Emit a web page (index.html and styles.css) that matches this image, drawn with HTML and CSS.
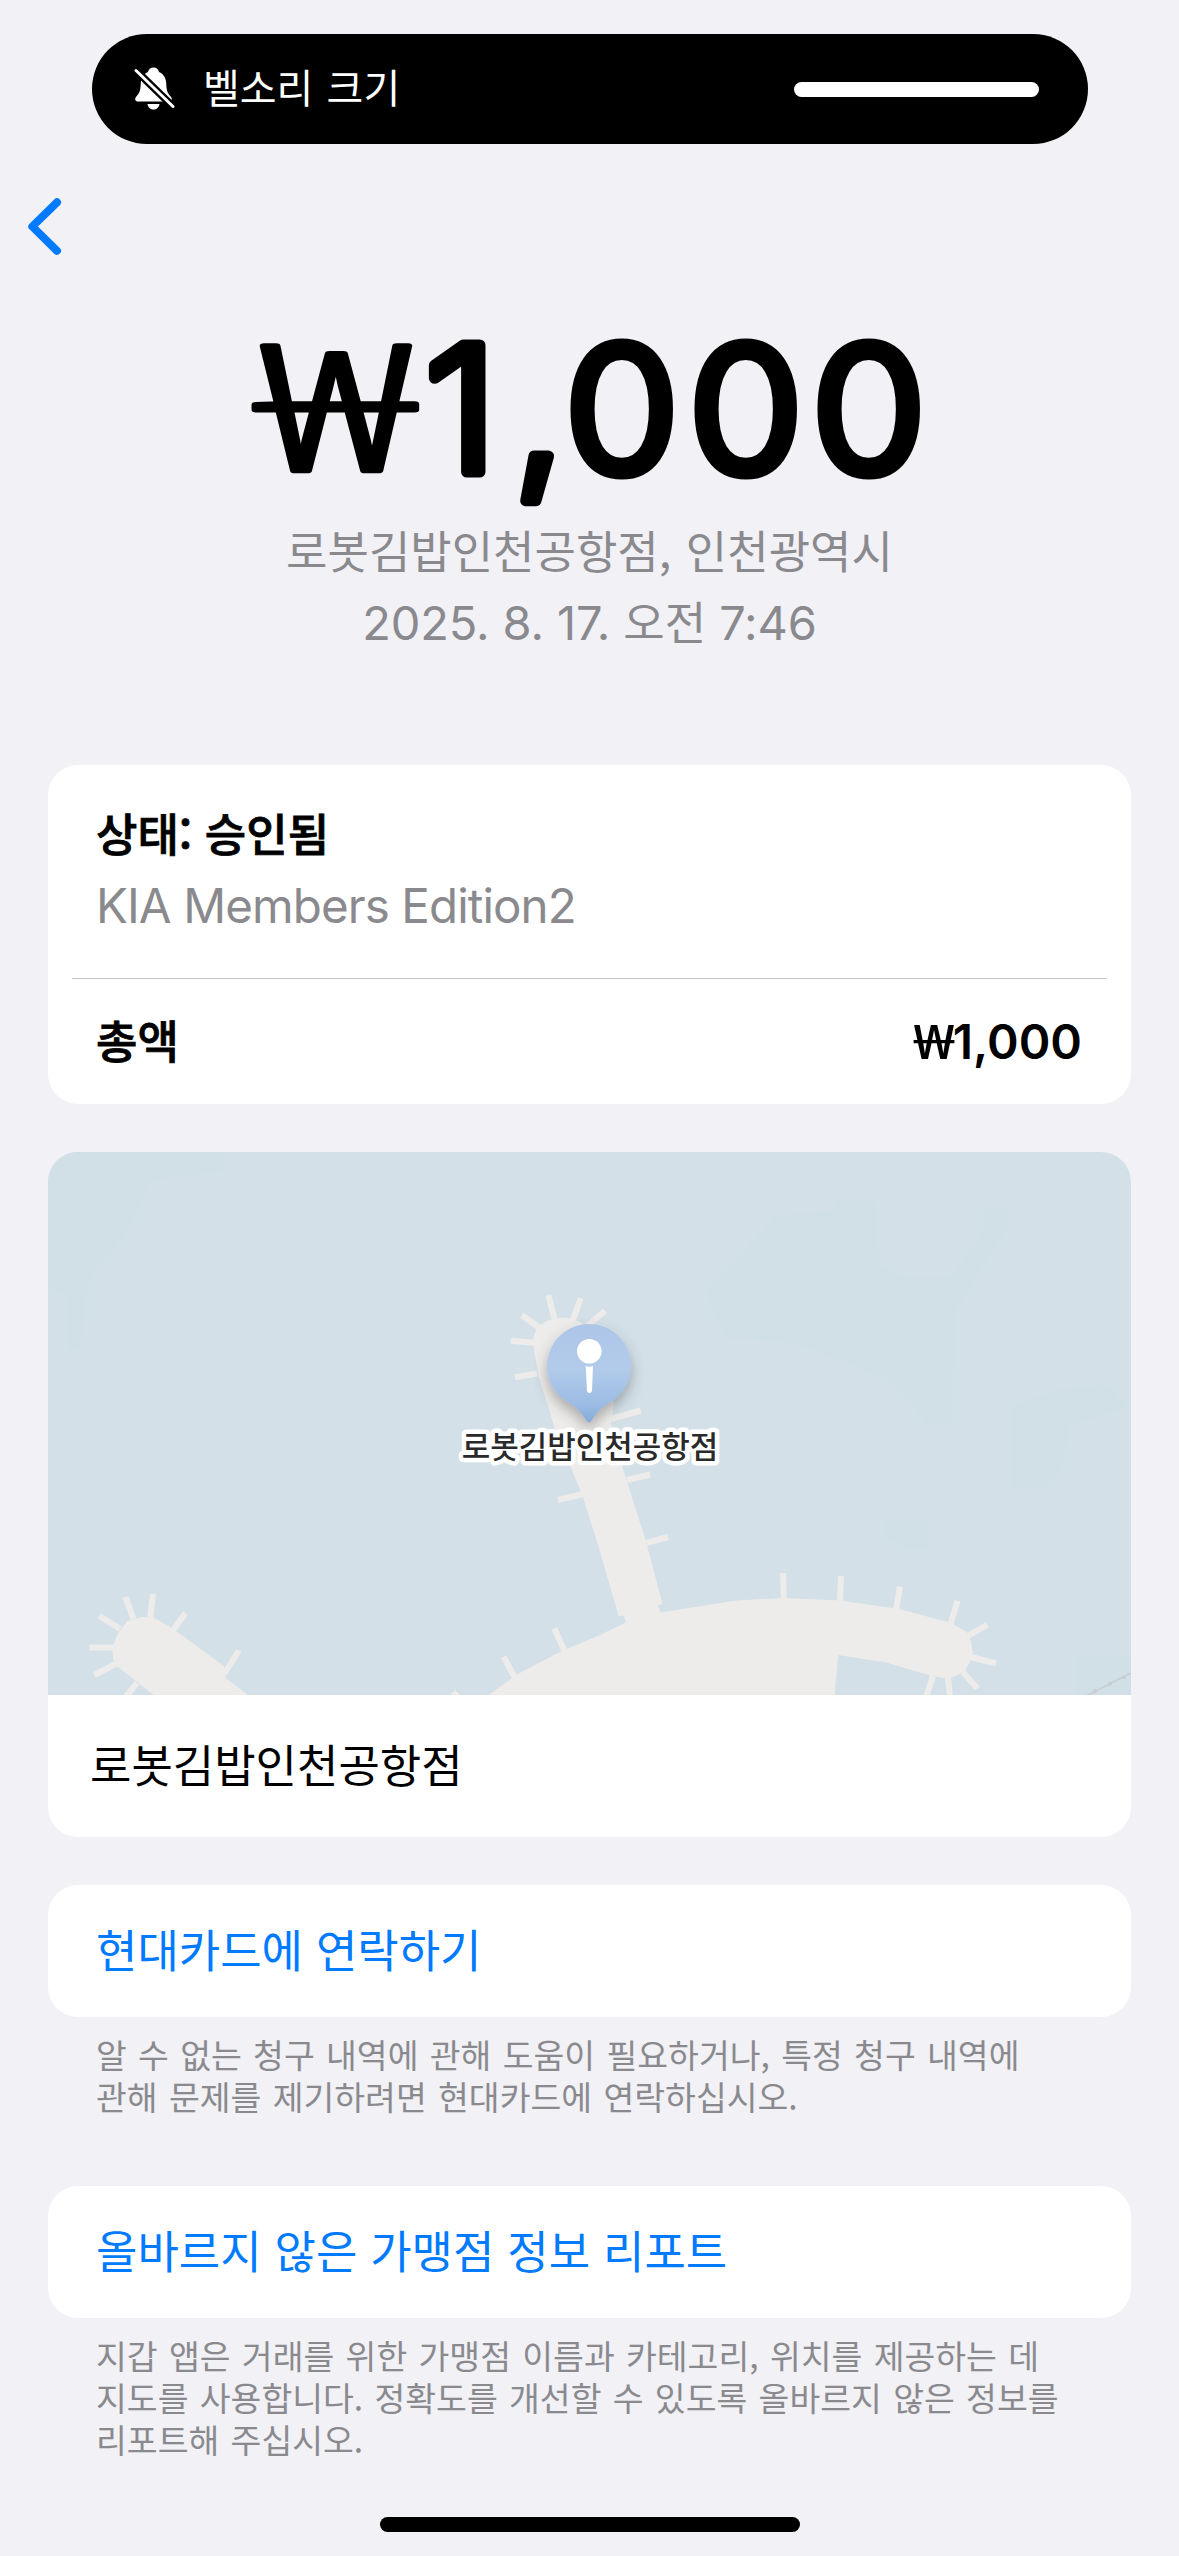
FILE: index.html
```html
<!DOCTYPE html>
<html lang="ko">
<head>
<meta charset="utf-8">
<title>거래 세부사항</title>
<link rel="stylesheet" href="styles.css">
</head>
<body>
<main class="screen">
  <div class="island">
    <svg class="bell" width="42" height="46" viewBox="0 0 42 46">
      <path d="M20.500 1.500C17.500 1.500 15.500 3.400 15 6C10.500 8 8 12 7.800 17C7.500 25 6.500 27 3 31C1.500 33 2 35.500 5 35.500H36C39 35.500 39.500 33 38 31C34.500 27 33.500 25 33.200 17C33 12 30.500 8 26 6C25.500 3.400 23.500 1.500 20.500 1.500Z" fill="#fff"/>
      <path d="M14.500 38H26.500C26 41.500 23.500 43.500 20.500 43.500S15 41.500 14.500 38Z" fill="#fff"/>
      <path d="M3 4.500L40 40.500" stroke="#000" stroke-width="7.500"/>
      <path d="M3 4.500L40 40.500" stroke="#fff" stroke-width="3" stroke-linecap="round"/>
    </svg>
    <span class="island-label">벨소리 크기</span>
    <span class="volume"></span>
  </div>

  <nav class="nav">
    <svg width="40" height="64" viewBox="0 0 40 64"><path d="M33 7.300L8.300 31.500L33 55.800" fill="none" stroke="#007aff" stroke-width="8" stroke-linecap="round" stroke-linejoin="round"/></svg>
  </nav>

  <header class="hero">
    <svg class="amount" width="700" height="200" viewBox="240 320 700 200">
      <text class="won" x="157.500" y="470.500">₩</text>
      <text class="digits" x="398.500 482 530 646.500 762" y="472">1,000</text>
    </svg>
    <p class="place">로봇김밥인천공항점, 인천광역시</p>
    <p class="date"><span>2025. 8. 17. </span>오전<span> 7:46</span></p>
  </header>

  <section class="card summary">
    <div class="status">
      <p class="strong">상태: 승인됨</p>
      <p class="card-name">KIA Members Edition2</p>
    </div>
    <div class="total">
      <span class="strong">총액</span>
      <span class="sum"><span class="sum-won">₩</span>1,000</span>
    </div>
  </section>

  <section class="card merchant">
    <svg class="map" width="1083" height="543" viewBox="48 1152 1083 543">
      <defs>
        <linearGradient id="pin" x1="0" y1="0" x2="0" y2="1">
          <stop offset="0" stop-color="#adc6e8"/>
          <stop offset=".45" stop-color="#b2cbea"/>
          <stop offset=".8" stop-color="#9dbde4"/>
          <stop offset="1" stop-color="#85abdb"/>
        </linearGradient>
        <filter id="shade" x="-40%" y="-40%" width="180%" height="180%">
          <feDropShadow dx="0" dy="7" stdDeviation="7" flood-color="#444" flood-opacity=".4"/>
        </filter>
      </defs>
      <rect x="48" y="1152" width="1083" height="543" fill="#d3e0e8"/>
      <g fill="#d1dfe7">
        <path d="M48 1152H225V1170L150 1181L128 1230L88 1280L80 1350H68L66 1295L48 1285Z"/>
        <path d="M777 1215L832 1212L835 1200H875L880 1265L905 1278H950L985 1230V1207H1007V1228L975 1278L955 1312L952 1424H928L890 1380L815 1350L775 1340L725 1338L706 1290L735 1260Z"/>
        <path d="M1012 1405L1060 1390L1105 1385L1128 1407L1070 1425L1062 1470L1045 1487H1012Z"/>
        <path d="M885 1519H928V1550H907L885 1535Z"/>
        <path d="M1077 1657H1131V1695H1077Z"/>
      </g>
      <g fill="#edecea">
        <path d="M118.600 1632L127.500 1621L141.800 1617L154.300 1618L170.400 1627L177.500 1632L223.900 1666L225.700 1678L248 1695H153.600L116.800 1666L113 1658L112.500 1647Z"/>
        <path d="M489 1695L516.800 1674.600L561.400 1651.300L600 1635L625.700 1622.400L624 1615.400L618.600 1616L600 1551.400L583 1497L554.300 1427L538 1373L533 1343.500C533 1327 545 1318 563 1317.500C577 1318 588 1325 594 1340L614 1403L611 1424L623 1469L645.400 1539.600L662.500 1603.600L658 1605.400L660.400 1612.400L736.400 1600.600L783 1598L840 1600.600L899 1609L950.700 1622.800L966.800 1632L971.400 1643L973 1656L964.300 1672L949 1679L931 1675.700L886.400 1662.400L838.200 1655L834.600 1695Z"/>
      </g>
      <path fill="none" stroke="#edecea" stroke-width="6" d="M133.500 1619L125.500 1597M150 1619L153 1594M172.500 1631L185.500 1613M224 1674L239 1650.500M120 1629L99.500 1616M114 1647.500H89.300M116.500 1663.500L94.300 1675M137 1683L125.700 1697M537 1373.500L515 1377.300M534 1342.700L510.700 1340.700M539 1327.500L522 1315M554.500 1319L548.300 1295M573 1320L580.700 1298.300M588 1325.500L605 1310.700M583 1494L557.900 1500M565 1652L554.300 1628.300M514.500 1677L503.600 1656.800M460 1699L453 1692M783.600 1599L783.200 1573M840 1601L841 1576M896 1610L900 1586.500M950.500 1624L957.500 1601M967 1636.500L987.500 1624.600M971 1657L996 1663.500M961 1670L977.500 1688.600M948 1678L950 1696M933 1675.700L926.400 1696M611 1419L640.700 1410.500M627 1480L650 1474.500M646 1543L668 1537"/>
      <path d="M1086 1696L1131 1673" stroke="#c7cdd1" stroke-width="1.500" fill="none"/>
      <g fill="#c7cdd1"><circle cx="1095" cy="1691" r="2"/><circle cx="1110" cy="1684" r="2"/><circle cx="1124" cy="1677" r="2"/></g>
      <path filter="url(#shade)" fill="url(#pin)" d="M589 1324A42 42 0 0 1 613 1400.500C601 1407 596 1413 592 1420Q589 1425 586 1420C582 1413 577 1407 565 1400.500A42 42 0 0 1 589 1324Z"/>
      <circle cx="589.300" cy="1351.300" r="12.300" fill="#fff"/>
      <path d="M585.700 1366Q589.300 1367.500 593 1366L592 1391Q589.300 1395.500 587 1391Z" fill="#fff"/>
      <text class="pin-label" x="590" y="1457.500">로봇김밥인천공항점</text>
    </svg>
    <p class="merchant-name">로봇김밥인천공항점</p>
  </section>

  <section class="card action">현대카드에 연락하기</section>
  <p class="note">알 수 없는 청구 내역에 관해 도움이 필요하거나, 특정 청구 내역에<br>관해 문제를 제기하려면 현대카드에 연락하십시오.</p>

  <section class="card action">올바르지 않은 가맹점 정보 리포트</section>
  <p class="note">지갑 앱은 거래를 위한 가맹점 이름과 카테고리, 위치를 제공하는 데<br>지도를 사용합니다. 정확도를 개선할 수 있도록 올바르지 않은 정보를<br>리포트해 주십시오.</p>

  <div class="home-bar"></div>
</main>
</body>
</html>
```
FILE: styles.css
```css
* { box-sizing: border-box; }

body {
  margin: 0;
  background: #f1f1f6;
  color: #000;
  font-family: "Noto Sans CJK KR", sans-serif;
  font-size: 45px;
}

p { margin: 0; }
svg { display: block; }

.screen {
  display: flex;
  flex-direction: column;
  width: 1179px;
  height: 2556px;
  padding: 34px 48px 24px;
  overflow: hidden;
}

.island {
  display: flex;
  flex: none;
  align-items: center;
  height: 110px;
  margin: 0 43px 0 44px;
  padding: 0 49px 0 41px;
  border-radius: 55px;
  background: #000;
  color: #fff;
}

.island-label {
  height: 110px;
  margin-left: 28px;
  font-size: 40px;
  line-height: 105px;
  word-spacing: 2px;
}

.volume {
  width: 245px;
  height: 15px;
  margin-left: auto;
  border-radius: 8px;
  background: #fff;
}

.nav {
  height: 176px;
  padding-top: 51px;
  margin-left: -24px;
}

.hero {
  display: flex;
  flex-direction: column;
  align-items: center;
  height: 445px;
  color: #8a8a8e;
}

.amount {
  flex: none;
  margin-bottom: -6px;
  overflow: visible;
}

.amount text {
  fill: #000;
  stroke: #000;
  stroke-linejoin: round;
}

.amount .won {
  font-size: 177px;
  font-weight: 100;
  stroke-width: 5.500px;
  transform: scaleX(1.65);
}

.amount .digits {
  font-family: Inter, sans-serif;
  font-size: 174px;
  font-weight: 300;
  stroke-width: 11px;
  transform: scaleX(1.065);
}

.place,
.date {
  line-height: 71px;
  white-space: pre;
}

.place { word-spacing: 2px; }

.date span {
  font-family: Inter, sans-serif;
  font-size: 47px;
  letter-spacing: -0.1px;
}

.card {
  flex: none;
  border-radius: 30px;
  background: #fff;
  overflow: hidden;
}

.summary {
  height: 339px;
  padding: 0 24px;
}

.status {
  height: 214px;
  padding: 32px 24px 0;
  border-bottom: 1px solid #c6c6c8;
}

.strong {
  font-weight: 500;
  line-height: 71px;
  -webkit-text-stroke: 0.8px #000;
}

.card-name {
  margin-top: 2px;
  color: #8a8a8e;
  font-family: Inter, sans-serif;
  font-size: 47.500px;
  letter-spacing: -0.9px;
  line-height: 71px;
}

.total {
  display: flex;
  align-items: center;
  justify-content: space-between;
  height: 125px;
  padding: 0 25px 0 24px;
}

.total .strong { margin-top: -5px; }

.sum {
  display: flex;
  align-items: baseline;
  margin-top: -3px;
  font-family: Inter, sans-serif;
  font-size: 48px;
  font-weight: 600;
}

.sum-won {
  width: 40px;
  font-family: "Noto Sans", sans-serif;
  font-weight: 500;
  transform: scaleX(1.27);
  transform-origin: left;
}

.merchant {
  height: 685px;
  margin-top: 48px;
}

.pin-label {
  font-size: 31px;
  font-weight: 500;
  text-anchor: middle;
  fill: #2a2a2a;
  stroke: #fff;
  stroke-width: 9px;
  stroke-linejoin: round;
  paint-order: stroke;
}

.merchant-name {
  padding-left: 42px;
  line-height: 137px;
}

.action {
  height: 132px;
  margin-top: 48px;
  padding-left: 48px;
  color: #007aff;
  line-height: 127px;
  word-spacing: 0.3px;
}

.note {
  padding: 16px 0 2px 48px;
  color: #8a8a8e;
  font-size: 33.500px;
  line-height: 42px;
  white-space: nowrap;
  word-spacing: 1.9px;
}

.note + .action { margin-top: 67px; }

.home-bar {
  flex: none;
  width: 420px;
  height: 15px;
  margin: auto auto 0;
  border-radius: 8px;
  background: #000;
}
```
